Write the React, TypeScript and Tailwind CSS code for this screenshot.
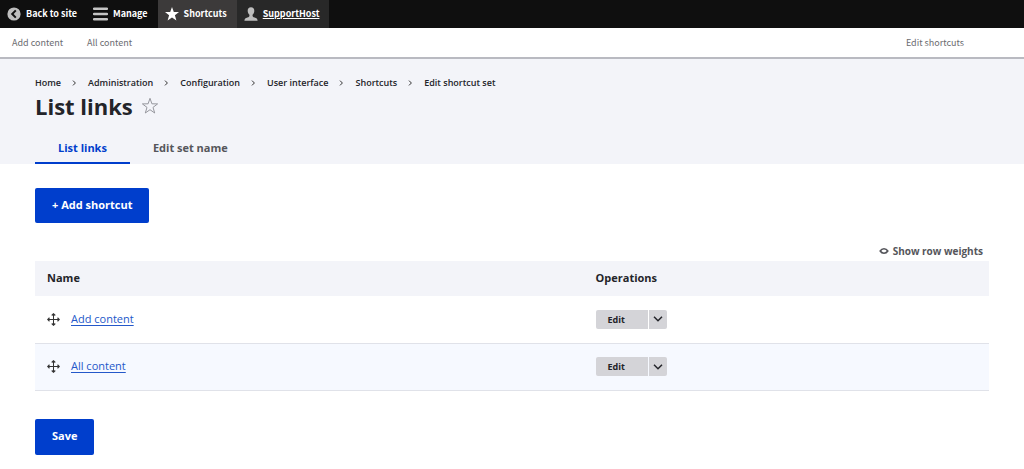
import React from "react";

type Shortcut = {
  title: string;
  striped: boolean;
};

const breadcrumbs = [
  "Home",
  "Administration",
  "Configuration",
  "User interface",
  "Shortcuts",
  "Edit shortcut set",
];

const shortcuts: Shortcut[] = [
  { title: "Add content", striped: false },
  { title: "All content", striped: true },
];

const BackIcon = () => (
  <svg viewBox="0 0 14 14" className="size-[14px]" aria-hidden="true">
    <circle cx="7" cy="7" r="6.6" fill="#bebebe" />
    <path d="M8.8 3.4 5.2 7l3.6 3.6" fill="none" stroke="#0f0f0f" strokeWidth="2" />
  </svg>
);

const MenuIcon = () => (
  <svg viewBox="0 0 15 14" className="h-[14px] w-[15px]" aria-hidden="true">
    <path
      d="M1 1.8h13M1 7h13M1 12.2h13"
      stroke="#c4c4c4"
      strokeWidth="2.4"
      strokeLinecap="round"
    />
  </svg>
);

const StarIcon = () => (
  <svg viewBox="0 0 14 14" className="size-[14px]" aria-hidden="true">
    <path
      d="M7 0l1.8 4.9 5.2.2-4.1 3.2 1.5 5.2L7 10.5l-4.4 3 1.5-5.2L0 5.1l5.2-.2z"
      fill="#fff"
    />
  </svg>
);

const UserIcon = () => (
  <svg viewBox="0 0 14 14" className="size-[14px]" aria-hidden="true">
    <path
      d="M7 .2c2.2 0 3.3 1.5 3.3 3.5 0 1.6-.7 3.2-1.7 4.1-.2 1.8.3 2.1 2 2.7 1.9.6 2.9 1.3 3 3.3H.4c.1-2 1.1-2.7 3-3.3 1.7-.6 2.2-.9 2-2.7-1-.9-1.7-2.5-1.7-4.1C3.7 1.7 4.8.2 7 .2z"
      fill="#bebebe"
    />
  </svg>
);

const MoveIcon = () => (
  <svg
    viewBox="0 0 14 14"
    className="size-[13px] shrink-0"
    fill="none"
    stroke="#333"
    aria-hidden="true"
  >
    <path d="M7 1v12M1 7h12" strokeWidth="1.1" />
    <path
      d="M5.1 2.7 7 .8l1.9 1.9M5.1 11.3 7 13.2l1.9-1.9M2.7 5.1.8 7l1.9 1.9M11.3 5.1 13.2 7l-1.9 1.9"
      strokeWidth="1.2"
    />
  </svg>
);

const Toolbar = () => {
  return (
    <nav
      aria-label="Toolbar"
      className="flex h-7 bg-[#0f0f0f] text-[9px] font-bold text-white"
    >
      <a href="#" className="flex items-center gap-[5px] pr-4 pl-[7px]">
        <BackIcon />
        Back to site
      </a>
      <a href="#" className="flex items-center gap-[5px] pr-2.5">
        <MenuIcon />
        Manage
      </a>
      <a href="#" className="flex items-center gap-[5px] bg-[#3c3a3a] pr-2.5 pl-[7px]">
        <StarIcon />
        Shortcuts
      </a>
      <a href="#" className="flex items-center gap-[5px] bg-[#282828] pr-2.5 pl-[7px]">
        <UserIcon />
        <span className="underline">SupportHost</span>
      </a>
    </nav>
  );
};

const Tray = () => {
  return (
    <div className="flex h-[31px] items-center gap-6 border-b-2 border-[#b9bac1] pr-[60px] pl-3 text-[9px] text-[#6b6b70]">
      <a href="#">Add content</a>
      <a href="#">All content</a>
      <a href="#" className="ml-auto">
        Edit shortcuts
      </a>
    </div>
  );
};

const PageHeader = () => {
  return (
    <header className="bg-[#f3f4f9] px-[35px] pt-4 text-[#232429]">
      <nav aria-label="Breadcrumb">
        <ol className="flex h-4 items-center gap-[11px] text-[9px] font-semibold">
          {breadcrumbs.map((item, i) => (
            <li key={item} className="flex items-center gap-[11px]">
              {i > 0 && (
                <svg viewBox="0 0 5 6" className="h-[6px] w-[5px]" aria-hidden="true">
                  <path d="M1 .6 3.4 3 1 5.4" fill="none" stroke="#333" />
                </svg>
              )}
              <a href="#">{item}</a>
            </li>
          ))}
        </ol>
      </nav>
      <div className="flex h-[30px] items-center gap-2">
        <h1 className="text-[22px] font-bold">List links</h1>
        <button type="button" aria-label="Add to shortcuts">
          <svg viewBox="0 0 18 18" className="size-[18px]" aria-hidden="true">
            <path
              d="M9 1.3l1.9 5.5 5.7.1-4.6 3.5 1.7 5.6L9 12.7 4.3 16 6 10.4 1.4 6.9l5.7-.1z"
              fill="none"
              stroke="#96979e"
            />
          </svg>
        </button>
      </div>
      <nav aria-label="Tabs" className="flex pt-[13px] text-[11px] font-bold">
        <a
          href="#"
          className="flex h-[30px] items-center border-b-2 border-[#003ecc] px-[23px] text-[#003ecc]"
        >
          List links
        </a>
        <a href="#" className="flex h-[30px] items-center px-[23px] pb-0.5 text-[#55565b]">
          Edit set name
        </a>
      </nav>
    </header>
  );
};

const ShortcutTable = () => {
  return (
    <table className="w-full table-fixed text-left">
      <thead>
        <tr className="h-[35px] bg-[#f3f4f9] text-[11px] text-[#232429]">
          <th className="w-23/40 px-3 font-bold">Name</th>
          <th className="px-3 font-bold">Operations</th>
        </tr>
      </thead>
      <tbody>
        {shortcuts.map((shortcut) => (
          <tr
            key={shortcut.title}
            className={
              shortcut.striped
                ? "h-[47px] border-b border-[#e0e2e9] bg-[#f6f9ff]"
                : "h-[47px] border-b border-[#e0e2e9]"
            }
          >
            <td className="px-3">
              <div className="flex items-center gap-[11px]">
                <MoveIcon />
                <a href="#" className="text-[11px] text-[#2458c9] underline underline-offset-2">
                  {shortcut.title}
                </a>
              </div>
            </td>
            <td className="px-3">
              <div className="flex h-[19px] gap-px text-[9px] font-bold text-[#232429]">
                <button type="button" className="rounded-l-xs bg-[#d4d4d8] pr-[23px] pl-3">
                  Edit
                </button>
                <button
                  type="button"
                  aria-label="List additional actions"
                  className="rounded-r-xs bg-[#d4d4d8] px-1"
                >
                  <svg viewBox="0 0 10 6" className="h-[6px] w-[10px]" aria-hidden="true">
                    <path d="M1 .8l4 4 4-4" fill="none" stroke="#232429" strokeWidth="1.5" />
                  </svg>
                </button>
              </div>
            </td>
          </tr>
        ))}
      </tbody>
    </table>
  );
};

const App = () => {
  return (
    <div className="min-h-screen bg-white font-['Open_Sans',sans-serif]">
      <div className="font-['Noto_Sans_CJK_JP',sans-serif]">
        <Toolbar />
        <Tray />
      </div>
      <PageHeader />
      <main className="px-[35px] pt-6">
        <a
          href="#"
          className="flex h-[35px] w-fit items-center rounded-xs bg-[#003ecc] px-[17px] text-[11px] font-bold text-white"
        >
          + Add shortcut
        </a>
        <div className="flex justify-end pt-5 pr-1.5 pb-0.5">
          <button
            type="button"
            className="flex h-4 items-center gap-1 text-[10px] font-bold text-[#55565b]"
          >
            <svg viewBox="0 0 10 8" className="h-[8px] w-[10px]" aria-hidden="true">
              <path
                d="M1.2 4C2.2 2.4 3.3 1.8 5 1.8S7.8 2.4 8.8 4C7.8 5.6 6.7 6.2 5 6.2S2.2 5.6 1.2 4z"
                fill="none"
                stroke="#55565b"
                strokeWidth="1.6"
              />
            </svg>
            Show row weights
          </button>
        </div>
        <ShortcutTable />
        <button
          type="submit"
          className="mt-7 h-9 rounded-xs bg-[#003ecc] px-[17px] text-[11px] font-bold text-white"
        >
          Save
        </button>
      </main>
    </div>
  );
};
export default App;
